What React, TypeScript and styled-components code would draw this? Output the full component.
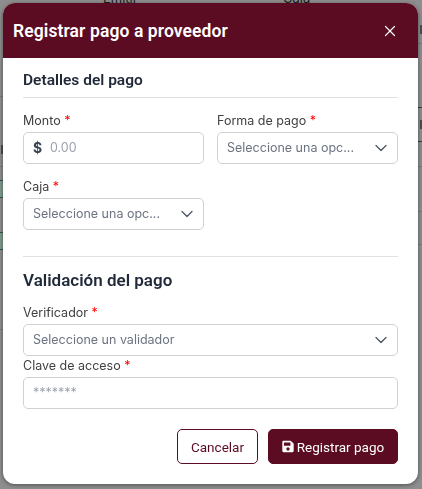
import React from 'react'
import styled, { createGlobalStyle } from 'styled-components'
import { X, ChevronDown } from 'lucide-react'

const wine = '#5c0c22'

const leftRows = [
  { h: 97, line: '#7a7a7a' },
  { h: 70, line: '#7a7a7a', mark: 48 },
  { h: 14, line: '#2f5a45' },
  { h: 17, line: '#2f5a45', tint: true },
  { h: 35, line: '#2f5a45' },
  { h: 17, line: '#2f5a45', tint: true },
  { h: 80, line: '#7a7a7a' },
]

const rightRows = [
  { h: 44, line: '#7a7a7a', mark: 25 },
  { h: 64, line: '#3c3c3c' },
  { h: 34, line: '#3c3c3c', mark: 12 },
  { h: 25, line: '#7a7a7a' },
  { h: 45, line: '#7a7a7a' },
  { h: 33, line: '#7a7a7a' },
]

const GlobalStyle = createGlobalStyle`
  html, body {
    margin: 0;
    padding: 0;
    width: 422px;
    height: 489px;
    overflow: hidden;
    background: #8e8e8e;
  }
  * {
    box-sizing: border-box;
  }
`

const Backdrop = styled.div`
  width: 422px;
  height: 489px;
  display: flex;
  justify-content: space-between;
`

const Strip = styled.div<{ $w: number }>`
  width: ${p => p.$w}px;
`

const StripRow = styled.div<{ $h: number; $line: string; $tint?: boolean }>`
  position: relative;
  height: ${p => p.$h}px;
  border-bottom: 1px solid ${p => p.$line};
  background: ${p => (p.$tint ? '#7f9a8c' : 'transparent')};
`

const StripMark = styled.span<{ $top: number }>`
  position: absolute;
  right: 0;
  top: ${p => p.$top}px;
  width: 2px;
  height: 9px;
  background: #4d4d4d;
`

const BehindHead = styled.span<{ $left: number }>`
  position: absolute;
  left: ${p => p.$left}px;
  top: -10px;
  font-family: Inter, sans-serif;
  font-size: 13px;
  color: #1c1c1c;
`

const Overlay = styled.div`
  position: fixed;
  inset: 0;
  padding: 3px 4px 5px 3px;
  font-family: Inter, "Liberation Sans", sans-serif;
`

const Modal = styled.div`
  width: 415px;
  height: 481px;
  background: #fff;
  border-radius: 12px;
  overflow: hidden;
  box-shadow: 0 1px 4px rgba(0, 0, 0, 0.45);
  display: flex;
  flex-direction: column;
`

const Header = styled.header`
  height: 55px;
  flex: none;
  background: ${wine};
  color: #fff;
  display: flex;
  align-items: center;
  justify-content: space-between;
  padding: 0 19px 0 10px;
`

const Title = styled.h2`
  margin: 0;
  font-family: Roboto, Inter, sans-serif;
  font-size: 17.5px;
  font-weight: 600;
  letter-spacing: 0.1px;
`

const Close = styled.span`
  display: flex;
  color: #fff;
`

const Body = styled.div`
  flex: 1;
  padding: 11px 20px 0;
  display: flex;
  flex-direction: column;
`

const SectionTitle = styled.h3<{ $large?: boolean }>`
  margin: 0;
  font-family: Roboto, Inter, sans-serif;
  font-size: ${p => (p.$large ? 17 : 15.5)}px;
  font-weight: 600;
  line-height: 22px;
  color: #1f2937;
`

const Rule = styled.hr<{ $above: number; $below: number }>`
  border: 0;
  border-top: 1px solid #e2e2e2;
  margin: ${p => p.$above}px 0 ${p => p.$below}px;
`

const Grid = styled.div`
  display: grid;
  grid-template-columns: 181px 181px;
  column-gap: 13px;
`

const Field = styled.div<{ $mt?: number; $mb?: number }>`
  margin-top: ${p => p.$mt ?? 0}px;
  margin-bottom: ${p => p.$mb ?? 0}px;
`

const Label = styled.label`
  display: block;
  padding-top: 1px;
  font-size: 12.5px;
  line-height: 16px;
  color: #404040;
  margin-bottom: 3px;
`

const Star = styled.span`
  color: #f00;
`

const Control = styled.div<{ $select?: boolean }>`
  height: 32px;
  border: 1px solid #d1d1d1;
  border-radius: 5px;
  background: #fff;
  display: flex;
  align-items: center;
  padding: 0 ${p => (p.$select ? 6 : 9)}px 1px 9px;
  font-size: 12.5px;
  color: #6b7280;
`

const Dollar = styled.span`
  font-weight: 700;
  font-size: 14px;
  color: #374151;
  width: 17px;
`

const Placeholder = styled.span<{ $light?: boolean }>`
  flex: 1;
  color: ${p => (p.$light ? '#9ca3af' : '#6b7280')};
`

const Footer = styled.div`
  display: flex;
  justify-content: flex-end;
  gap: 10px;
  margin-top: 20px;
`

const Button = styled.button<{ $primary?: boolean }>`
  height: 35px;
  border-radius: 5px;
  border: 1px solid ${wine};
  background: ${p => (p.$primary ? wine : '#fff')};
  color: ${p => (p.$primary ? '#fff' : wine)};
  font-family: Roboto, Inter, sans-serif;
  font-size: 13.5px;
  padding: 0;
  display: flex;
  align-items: center;
  justify-content: center;
  gap: 3px;
  width: ${p => (p.$primary ? 130 : 81)}px;
`

const SaveIcon = () => (
  <svg width="12" height="13" viewBox="0 0 448 512" fill="currentColor">
    <path d="M433.9 129.9l-83.9-83.9A48 48 0 0 0 316.1 32H48C21.5 32 0 53.5 0 80v352c0 26.5 21.5 48 48 48h352c26.5 0 48-21.5 48-48V163.9a48 48 0 0 0-14.1-34zM224 416c-35.3 0-64-28.7-64-64s28.7-64 64-64 64 28.7 64 64-28.7 64-64 64zm96-304.5V212c0 6.6-5.4 12-12 12H76c-6.6 0-12-5.4-12-12V108c0-6.6 5.4-12 12-12h228.5c3.2 0 6.2 1.3 8.5 3.5l3.5 3.5c2.2 2.3 3.5 5.3 3.5 8.5z" />
  </svg>
)

const Select = ({ text }: { text: string }) => (
  <Control $select>
    <Placeholder>{text}</Placeholder>
    <ChevronDown size={20} strokeWidth={1.5} color="#4b5563" />
  </Control>
)

const Required = ({ children }: { children: string }) => (
  <Label>
    {children} <Star>*</Star>
  </Label>
)

const App = (): JSX.Element => (
  <>
    <GlobalStyle />
    <Backdrop>
      <Strip $w={3}>
        {leftRows.map((row, i) => (
          <StripRow key={i} $h={row.h} $line={row.line} $tint={row.tint}>
            {row.mark !== undefined && <StripMark $top={row.mark} />}
          </StripRow>
        ))}
      </Strip>
      <BehindHead $left={103}>Emitir</BehindHead>
      <BehindHead $left={283}>Caja</BehindHead>
      <Strip $w={4}>
        {rightRows.map((row, i) => (
          <StripRow key={i} $h={row.h} $line={row.line}>
            {row.mark !== undefined && <StripMark $top={row.mark} />}
          </StripRow>
        ))}
      </Strip>
    </Backdrop>
    <Overlay>
      <Modal>
        <Header>
          <Title>Registrar pago a proveedor</Title>
          <Close>
            <X size={18} strokeWidth={1.6} />
          </Close>
        </Header>
        <Body>
          <SectionTitle>Detalles del pago</SectionTitle>
          <Rule $above={6} $below={14} />
          <Grid>
            <Field $mb={14}>
              <Required>Monto</Required>
              <Control>
                <Dollar>$</Dollar>
                <Placeholder $light>0.00</Placeholder>
              </Control>
            </Field>
            <Field $mb={14}>
              <Required>Forma de pago</Required>
              <Select text="Seleccione una opc..." />
            </Field>
            <Field>
              <Required>Caja</Required>
              <Select text="Seleccione una opc..." />
            </Field>
          </Grid>
          <Rule $above={26} $below={12} />
          <SectionTitle $large>Validación del pago</SectionTitle>
          <Field $mt={13} $mb={1}>
            <Required>Verificador</Required>
            <Select text="Seleccione un validador" />
          </Field>
          <Field>
            <Required>Clave de acceso</Required>
            <Control>
              <Placeholder $light>*******</Placeholder>
            </Control>
          </Field>
          <Footer>
            <Button>Cancelar</Button>
            <Button $primary>
              <SaveIcon />
              Registrar pago
            </Button>
          </Footer>
        </Body>
      </Modal>
    </Overlay>
  </>
)

export default App
